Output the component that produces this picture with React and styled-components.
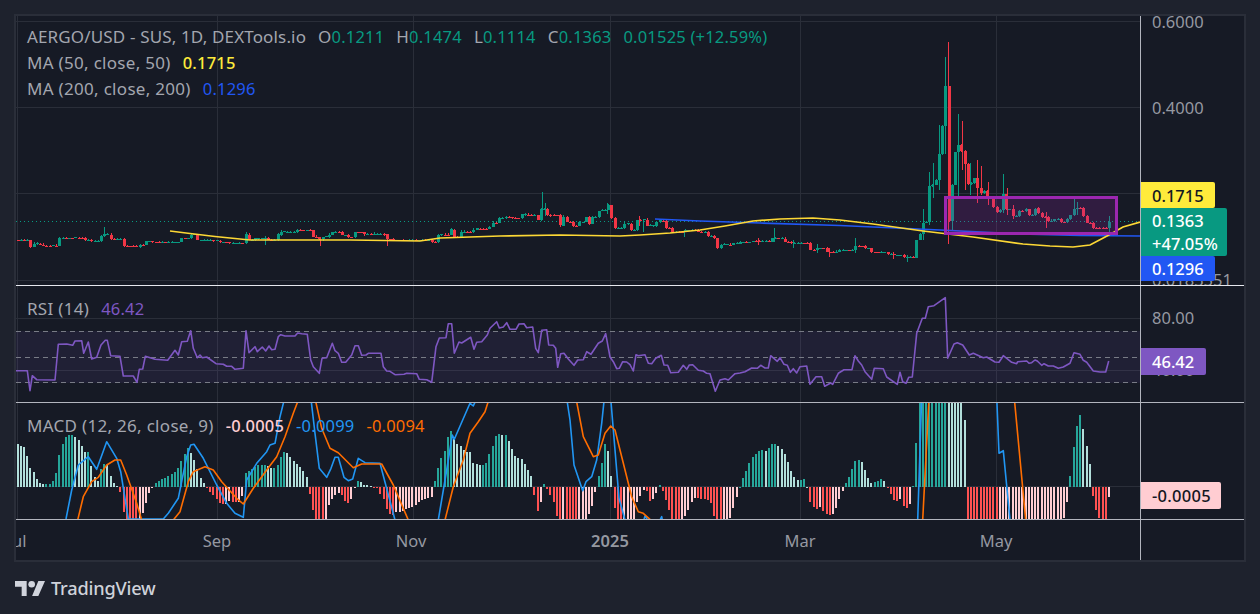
import React from 'react';
import styled, { createGlobalStyle } from 'styled-components';

const GlobalStyle = createGlobalStyle`
    html, body {
        margin: 0;
        padding: 0;
        background: #1e222d;
    }
`

// chart colours
const UP = '#089981';
const DOWN = '#f23645';
const GRID = '#2a2e39';
const AXIS_LINE = '#b2b5be';

// x of every daily candle, the last one sits at 1109
const STEP = 3.21;
const COUNT = 342;
const candleX = Array.from({ length: COUNT }, (_, i) => 1109 - STEP * (COUNT - 1 - i));

const noise = (i) => {
    const v = Math.sin(i * 12.9898) * 43758.5453;
    return v - Math.floor(v);
};

const interp = (pts, x) => {
    if (x <= pts[0][0]) return pts[0][1];
    for (let i = 1; i < pts.length; i++) {
        if (x <= pts[i][0]) {
            const [x0, y0] = pts[i - 1];
            const [x1, y1] = pts[i];
            return y0 + ((y1 - y0) * (x - x0)) / (x1 - x0);
        }
    }
    return pts[pts.length - 1][1];
};

// last traced close at or before this candle, so flats stay flat and jumps stay blocks
const stepAt = (pts, x) => {
    let y = pts[0][1];
    for (const [px, py] of pts) {
        if (px > x + 1.6) break;
        y = py;
    }
    return y;
};

// traced off a 3x crop: flat X,Y list back to page pixels
const traced = (ox, oy, flat) => {
    const out = [];
    for (let i = 0; i < flat.length; i += 2) out.push([ox + flat[i] / 3, oy + flat[i + 1] / 3]);
    return out;
};

const toPath = (pts) => pts.map(([x, y], i) => `${i ? 'L' : 'M'}${x.toFixed(1)} ${y.toFixed(1)}`).join('');

const closePts = [
    [14, 240], [28, 240], [32, 246.7], [35, 243.5], [40, 244.5], [42, 245.5], [57, 245.5], [59, 238], [68, 238], [75, 237.5],
    [83, 238], [86, 240], [91, 240.7], [100, 236], [104, 234.5], [110, 239], [122, 246], [135, 247], [139, 244.5], [147, 241],
    [152, 242.3], [170, 242.3], [182, 238.3], [192, 234.5], [197, 240], [213, 240.7], [220, 242.3], [230, 243.3], [245, 243.3],
    [247, 234.5], [250, 240], [255, 238.3], [260, 238], [268, 240], [277, 234.5], [282, 231.7], [293, 231.7], [298, 230],
    [307, 230], [312, 236.7], [318, 239.3], [323, 236.7], [328, 235], [333, 232], [342, 235], [348, 236.7], [355, 232.3],
    [363, 234], [383, 234.3], [386, 239.3], [393, 240], [419, 240], [433, 242], [438, 234.5], [447, 234.5], [450, 229.5],
    [455, 236.7], [460, 231.7], [472, 229.5], [478, 228.5], [488, 226.7], [492, 222.7], [498, 218], [507, 216.7], [511, 218],
    [520, 214.5], [527, 215], [537, 220], [542, 209], [548, 215], [557, 215], [559, 225.7], [562, 216.7], [568, 222],
    [573, 225.7], [578, 222], [587, 217], [590, 224], [593, 217], [600, 210.7], [603, 210], [607, 205], [611, 218], [615, 228],
    [620, 228], [623, 223.5], [628, 223.5], [632, 230], [636, 219.5], [642, 219.5], [648, 225.5], [655, 222], [660, 220.6],
    [666, 227.7], [671, 232], [678, 232], [685, 230], [695, 230], [698, 232], [707, 236], [713, 238], [716, 248], [719, 244.5],
    [727, 244.5], [732, 243.5], [740, 242], [753, 241], [770, 241.5], [772, 238], [778, 238.5], [785, 241.5], [792, 243],
    [800, 243], [810, 250], [817, 248], [827, 252], [835, 251.5], [840, 250], [855, 246], [865, 248.3], [873, 252.3], [887, 254],
    [895, 255], [903, 256.7], [913, 257.5], [916.2, 240], [919.4, 234], [922.6, 223], [925.8, 222], [929.2, 186], [932.4, 185],
    [935.7, 180], [938.9, 154], [942.1, 126], [945.3, 86], [948.5, 221], [951.7, 185], [954.9, 152], [958.2, 145], [961.4, 151],
    [964.6, 164], [967.8, 184], [971, 183], [974.2, 178], [977.4, 188], [980.6, 193], [983.8, 191], [987, 199], [990, 198],
    [993, 206.7], [996, 212], [1000, 210], [1003, 194], [1007, 209], [1013, 216], [1019, 211], [1025, 209], [1030, 215],
    [1035, 208.3], [1039, 212.7], [1043, 217], [1048, 220.7], [1053, 219.3], [1060, 222], [1067, 219.3], [1071, 215],
    [1074, 208.3], [1078, 208.3], [1083, 216], [1088, 222.7], [1093, 227.7], [1098, 227.7], [1105, 228.3], [1109, 221.7],
];

// the long wicks, [x, top, bottom]
const spikes = [
    [104, 227, 236], [246, 232, 243], [265, 236, 245], [320, 239, 246], [387, 240, 246], [542, 192, 220], [545, 203, 216],
    [607, 203, 214], [639, 216, 226], [643, 220, 232], [684, 230, 237], [758, 238, 245], [774, 228, 242], [793, 240, 248],
    [817, 244, 253], [829, 248, 257], [855, 238, 253], [893, 252, 259], [907, 255, 262], [923, 209, 240], [929, 172, 225],
    [933, 163, 198], [939, 125, 190], [945, 57, 154], [948, 42, 244], [952, 190, 230], [958, 114, 197], [962, 121, 170],
    [965, 150, 190], [970, 163, 195], [977, 160, 203], [981, 166, 195], [988, 182, 205], [1003, 174, 213], [1007, 188, 215],
    [1013, 205, 219], [1046, 212, 228], [1074, 197, 216], [1077, 202, 215], [1109, 216, 232],
];

const candles = candleX.map((x, i) => {
    const wobble = x < 915 || x > 1000 ? (noise(i) - 0.5) * 0.6 : 0;
    const close = stepAt(closePts, x) + wobble;
    const prev = i ? stepAt(closePts, candleX[i - 1]) : close;
    const top = Math.min(prev, close);
    const bottom = Math.max(prev, close);
    return {
        x: Math.round(x),
        up: close <= prev,
        top,
        height: Math.max(bottom - top, 1),
        high: top - noise(i + 7) * 1.4,
        low: bottom + noise(i + 13) * 1.4,
    };
});

const ma50 = [
    [170, 231], [190, 233.5], [215, 236.5], [250, 240], [300, 240], [350, 240], [420, 241], [440, 238], [500, 236], [560, 235],
    [620, 236], [640, 235], [670, 233], [700, 230], [725, 226], [753, 221], [780, 219], [813, 218], [840, 220], [873, 224],
    [923, 231], [973, 237], [1023, 244], [1050, 246], [1073, 247], [1090, 245], [1107, 236], [1123, 227], [1140, 222],
];
const ma200 = [[655, 219], [700, 221], [760, 223], [840, 225.5], [940, 230], [1020, 234], [1080, 235.5], [1140, 236]];

const rsi = [
    ...traced(0, 285, [46, 257, 82, 257, 90, 317, 97, 272, 110, 284, 165, 285, 175, 178, 200, 177, 218, 181, 225, 168, 245, 167, 251, 205, 265, 171, 275, 222, 290, 217, 303, 180, 316, 166, 322, 166, 332, 212, 360, 214, 370, 273, 400, 273, 411, 292, 418, 253, 428, 252, 436, 214, 465, 223, 503, 226, 525, 196, 535, 210, 545, 170, 562, 169, 572, 137, 580, 190, 592, 218, 600, 210, 607, 218, 620, 216, 648, 236, 670, 238, 680, 244, 695, 244, 705, 253, 730, 250, 738, 137, 747, 203, 765, 185, 772, 200, 787, 186, 797, 198, 807, 183, 815, 194, 825, 193, 835, 155, 842, 149, 855, 153, 885, 153, 893, 144, 905, 146, 922, 148, 932, 225, 940, 245, 958, 265, 966, 220, 980, 218, 997, 175, 1005, 197, 1015, 205, 1025, 232, 1037, 232, 1055, 210, 1065, 182, 1075, 182, 1085, 211, 1098, 210, 1105, 205, 1143, 205, 1150, 245, 1160, 258, 1170, 259, 1185, 269, 1212, 268, 1220, 265, 1250, 266, 1258, 283]),
    ...traced(420, 285, [20, 284, 35, 292, 48, 185, 58, 159, 78, 158, 85, 116, 95, 116, 103, 205, 117, 171, 125, 174, 152, 157, 162, 193, 170, 172, 185, 170, 202, 150, 210, 130, 230, 110, 238, 129, 250, 126, 260, 113, 270, 133, 288, 133, 297, 117, 312, 116, 320, 128, 338, 126, 347, 190, 355, 203, 365, 136, 380, 134, 386, 180, 400, 181, 407, 190, 413, 247, 422, 206, 432, 205, 445, 222, 462, 241, 473, 225, 490, 224, 500, 200, 513, 208, 535, 175, 547, 168, 557, 146, 570, 216, 580, 230, 590, 251, 598, 250, 608, 230, 620, 231, 630, 239, 640, 258, 648, 209, 655, 212, 675, 209, 685, 235, 695, 236, 707, 220, 724, 211, 732, 240, 743, 241, 752, 263, 775, 262, 790, 241, 800, 253, 808, 240, 818, 239, 835, 256, 850, 258, 860, 265, 870, 266, 886, 319, 900, 285, 915, 281, 925, 285, 945, 266, 960, 264, 975, 260, 995, 249, 1012, 250, 1022, 241, 1035, 249, 1045, 249, 1052, 212, 1072, 229, 1080, 218, 1092, 238, 1102, 241, 1111, 262, 1120, 251, 1130, 264, 1140, 245, 1160, 243, 1170, 298, 1188, 275, 1205, 275, 1214, 304, 1232, 294, 1238, 298, 1255, 265]),
    ...traced(840, 285, [12, 254, 36, 254, 45, 212, 55, 228, 65, 240, 75, 260, 95, 283, 103, 250, 130, 251, 140, 276, 172, 298, 180, 262, 188, 290, 198, 295, 206, 277, 217, 276, 230, 145, 247, 100, 256, 100, 265, 65, 282, 62, 316, 38, 323, 220, 342, 177, 352, 173, 368, 180, 388, 210, 400, 205, 430, 218, 440, 216, 465, 231, 477, 232, 490, 212, 515, 232, 530, 236, 533, 230, 560, 228, 567, 235, 575, 233, 585, 225, 592, 228, 605, 241, 612, 236, 625, 243, 640, 243, 655, 250, 670, 246, 690, 235, 702, 203, 720, 208, 730, 226, 740, 232, 760, 258, 780, 261, 797, 261, 806, 228]),
];

// histogram, px above/below the zero line. values past the pane edge just clip
const histPts = [
    ...traced(0, 0, [0, 129, 50, 129, 77, 117, 88, 60, 100, 45, 115, 15, 128, 9, 150, 9, 165, 21, 176, 87, 187, 126, 200, 156, 220, 156, 240, 135, 252, 105, 265, 105, 275, 60, 285, 24, 295, 15, 305, 60, 320, 75, 335, 21, 345, 6, 355, -1, 360, -9, 375, -105, 385, -150, 410, -210, 420, -99, 430, -75, 445, -24, 455, -3, 465, 9, 480, 18, 495, 27, 510, 33, 530, 48, 540, 69, 550, 87, 560, 120, 575, 99, 590, 60, 605, 18, 620, 0, 630, -15, 650, -36, 660, -51, 675, -54, 690, -42, 700, -48, 725, -45, 735, 39, 750, 48, 765, 60, 780, 66, 800, 66, 815, 54, 830, 57, 845, 96, 855, 108, 870, 90, 885, 72, 905, 57, 920, 27, 928, -15, 940, -75, 950, -150, 970, -190, 985, -60, 1000, -30, 1015, -18, 1030, -30, 1040, -54, 1055, -36, 1065, 3, 1075, 21, 1090, 6, 1110, 3, 1130, -3, 1150, -36, 1160, -66, 1175, -90, 1190, -75, 1205, -75, 1220, -66, 1240, -60, 1258, -45]),
    ...traced(420, 0, [10, -39, 20, -36, 35, -30, 45, 18, 57, 66, 67, 96, 75, 111, 85, 156, 97, 174, 105, 129, 115, 129, 125, 120, 135, 105, 150, 105, 160, 72, 170, 69, 182, 63, 190, 66, 200, 72, 210, 102, 220, 126, 230, 159, 240, 156, 258, 156, 268, 132, 278, 108, 288, 87, 300, 84, 308, 84, 318, 60, 328, 42, 337, 27, 345, -39, 357, -90, 365, -27, 375, 21, 383, -12, 395, -30, 405, -54, 418, -130, 435, -110, 470, -200, 505, -84, 510, -81, 520, -45, 530, 3, 540, 51, 550, 87, 558, 150, 570, 75, 578, -3, 597, -200, 640, -110, 647, -60, 655, -36, 665, -24, 675, 3, 685, -27, 693, -51, 705, -27, 713, -12, 723, 15, 732, -30, 745, -51, 755, -120, 780, -170, 790, -93, 800, -84, 810, -57, 820, -33, 830, -33, 840, -36, 850, -36, 860, -42, 870, -39, 878, -66, 900, -170, 935, -84, 945, -48, 955, -15, 965, 18, 975, 36, 985, 63, 995, 84, 1005, 96, 1015, 105, 1025, 111, 1040, 105, 1052, 126, 1062, 129, 1080, 120, 1092, 102, 1100, 87, 1110, 54, 1118, 39, 1128, 21, 1140, 21, 1158, 24, 1168, -39, 1180, -60, 1190, -66, 1200, -60, 1215, -81, 1228, -84, 1238, -84, 1245, -72, 1258, -36]),
    ...traced(840, 0, [5, -18, 15, 6, 25, 27, 33, 39, 42, 72, 52, 81, 62, 81, 72, 60, 80, 36, 92, 9, 100, 12, 110, 15, 120, 21, 128, 24, 140, 6, 150, -18, 158, -33, 168, -48, 180, -33, 188, -54, 198, -66, 207, -57, 216, -42, 228, 111, 237, 270, 315, 400, 373, 255, 376, 0, 380, -120, 470, -360, 675, -90, 681, -51, 690, 18, 702, 129, 712, 189, 720, 216, 729, 177, 738, 132, 750, 63, 758, -24, 768, -69, 777, -93, 797, -99, 807, -30]),
];
const ZERO = 486.7;
const histValues = candleX.map((x) => interp(histPts, x));
const histBars = candleX.map((x, i) => {
    const v = histValues[i];
    const prev = i ? histValues[i - 1] : v;
    let fill;
    if (v >= 0) fill = v >= prev ? '#26a69a' : '#b2dfdb';
    else fill = v <= prev ? '#ff5252' : '#ffcdd2';
    return { x: Math.round(x) - 1, y: v >= 0 ? ZERO - v : ZERO, height: Math.max(Math.abs(v), 1), fill };
});

const macdLine = [
    ...traced(0, 400, [198, 357, 215, 270, 235, 195, 265, 170, 290, 208, 320, 125, 350, 175, 362, 215, 385, 357, 490, 357, 505, 340, 535, 295, 560, 170, 572, 135, 582, 133, 610, 175, 650, 255, 680, 310, 705, 340, 730, 352, 740, 240, 770, 190, 800, 155, 810, 135, 825, 130, 840, 50, 855, -10, 932, -10, 945, 100, 958, 205, 980, 232, 993, 205, 1005, 172, 1015, 172, 1032, 232, 1045, 242, 1058, 237, 1075, 175, 1095, 188, 1140, 190, 1185, 360]),
    ...traced(420, 400, [55, 360, 80, 210, 97, 105, 103, 118, 150, 10, 160, 18, 170, -5, 440, -5, 450, 60, 462, 195, 488, 272, 498, 245, 515, 230, 530, 180, 545, 70, 553, -5, 572, -5, 585, 150, 597, 295, 615, 360, 660, 400, 675, 348, 683, 360, 700, 400, 725, 350, 735, 400]),
    ...traced(840, 400, [200, 500, 233, 360, 245, -10, 470, -10, 477, 160, 490, 152, 510, 360]),
];
const signalLine = [
    ...traced(0, 400, [233, 360, 250, 290, 275, 245, 295, 232, 320, 195, 345, 180, 362, 180, 380, 225, 410, 310, 425, 360, 520, 360, 540, 335, 565, 245, 580, 215, 615, 200, 640, 210, 665, 245, 710, 295, 730, 312, 760, 265, 800, 210, 830, 170, 855, 110, 880, 40, 897, -5, 945, -5, 965, 85, 990, 145, 1015, 158, 1060, 203, 1085, 192, 1145, 192, 1180, 255, 1225, 360]),
    ...traced(420, 400, [75, 360, 100, 260, 130, 180, 150, 100, 175, 65, 195, 35, 208, -5, 468, -5, 490, 110, 520, 170, 535, 165, 555, 100, 572, 78, 585, 90, 605, 170, 635, 290, 655, 335, 670, 340, 692, 360]),
    ...traced(840, 400, [248, 360, 267, -5, 523, -5, 557, 360]),
];

const monthLines = [17, 217, 413, 610, 800, 996];

const Page = styled.div`
    width: 1260px;
    height: 614px;
    padding: 14px 0 0 14px;
    box-sizing: border-box;
    background: #1e222d;
    font-family: "Noto Sans", "Open Sans", sans-serif;
    overflow: hidden;
`

const Frame = styled.div`
    width: 1232px;
    height: 548px;
    box-sizing: border-box;
    border: 2px solid ${GRID};
    background: #161a25;
    display: grid;
    grid-template-rows: 270px 117px 117px 40px;
`

const Pane = styled.section`
    position: relative;
    display: grid;
    grid-template-columns: 1124px 1fr;
    border-bottom: 1px solid ${(p) => (p.$strong ? '#e6e8ee' : AXIS_LINE)};
    overflow: hidden;
`

const Plot = styled.svg`
    display: block;
    width: 1124px;
    height: 100%;
`

const PriceAxis = styled.div`
    position: relative;
    border-left: 1px solid ${AXIS_LINE};
    overflow: hidden;
`

const PriceLabel = styled.span`
    position: absolute;
    left: 11px;
    top: ${(p) => p.$y}px;
    transform: translateY(-50%);
    font-size: 16.5px;
    line-height: 20px;
    color: #9598a1;
    white-space: nowrap;
`

const PriceTag = styled.span`
    position: absolute;
    left: 0;
    top: ${(p) => p.$y}px;
    width: ${(p) => p.$w}px;
    height: ${(p) => p.$h}px;
    box-sizing: border-box;
    padding-left: 11px;
    display: flex;
    flex-direction: column;
    justify-content: center;
    border-radius: 0 2px 2px 0;
    background: ${(p) => p.$bg};
    color: ${(p) => p.$fg || '#fff'};
    font-size: 16.5px;
    font-weight: 500;
    line-height: 23px;
    letter-spacing: ${(p) => p.$track || 0}px;
    z-index: ${(p) => p.$z || 1};
`

const Legend = styled.div`
    position: absolute;
    left: 11px;
    top: ${(p) => p.$top}px;
    display: flex;
    flex-direction: column;
    gap: 3px;
    z-index: 2;
    pointer-events: none;
`

const LegendRow = styled.div`
    display: flex;
    gap: 12px;
    height: 23px;
    align-items: center;
    font-size: 17px;
    letter-spacing: ${(p) => p.$track || 0.3}px;
    color: #a3a6af;
    white-space: nowrap;
`

const Value = styled.span`
    color: ${(p) => p.$color};
    font-size: 16.5px;
    letter-spacing: 0.2px;
    font-weight: ${(p) => (p.$bold ? 500 : 400)};
`

const TimeAxis = styled.div`
    position: relative;
    overflow: hidden;
`

const TimeLabel = styled.span`
    position: absolute;
    left: ${(p) => p.$x}px;
    top: 10px;
    transform: translateX(-50%);
    font-size: 16.5px;
    line-height: 22px;
    font-weight: ${(p) => (p.$bold ? 600 : 400)};
    color: #9598a1;
`

const AxisStub = styled.div`
    position: absolute;
    left: 1124px;
    top: 0;
    bottom: 0;
    width: 1px;
    background: ${AXIS_LINE};
`

const Brand = styled.footer`
    display: flex;
    align-items: center;
    gap: 6px;
    height: 30px;
    margin: 11px 0 0 1px;
    color: #cfd2da;
    font-size: 18.2px;
    font-weight: 500;
    letter-spacing: -0.2px;
`

const Logo = () => (
    <svg width="30" height="16" viewBox="0 0 36 19">
        <path fill="#d1d4dc" d="M14 19H8V8H0V1h14v18zM28 19h-7.5L28 1h8l-8 18z" />
        <circle fill="#d1d4dc" cx="20" cy="5" r="4" />
    </svg>
);

const GridLines = ({ rows, top, bottom }) => (
    <g stroke={GRID} strokeWidth="1" shapeRendering="crispEdges">
        {monthLines.map((x) => <line key={x} x1={x + 0.5} x2={x + 0.5} y1={top} y2={bottom} />)}
        {rows.map((y) => <line key={y} x1="16" x2="1140" y1={y + 0.5} y2={y + 0.5} />)}
    </g>
);

const Candles = () => (
    <g shapeRendering="crispEdges">
        {candles.map((c, i) => (
            <g key={i} fill={c.up ? UP : DOWN}>
                <rect x={c.x} y={c.high} width="1" height={c.low - c.high} />
                <rect x={c.x - 1} y={c.top} width="3" height={c.height} />
            </g>
        ))}
        {spikes.map(([x, top, bottom]) => {
            const near = candles.reduce((a, b) => (Math.abs(b.x - x) < Math.abs(a.x - x) ? b : a));
            return <rect key={x} x={x} y={top} width="1" height={bottom - top} fill={near.up ? UP : DOWN} />;
        })}
    </g>
);

const MainPane = () => (
    <Pane $strong>
        <Plot viewBox="16 16 1124 269">
            <GridLines rows={[21, 107, 193, 280]} top={16} bottom={285} />
            <line x1="16" x2="1140" y1="221.5" y2="221.5" stroke={UP} strokeDasharray="1 3" />
            <Candles />
            <path d={toPath(ma200)} fill="none" stroke="#2157f3" strokeWidth="1.7" />
            <path d={toPath(ma50)} fill="none" stroke="#fdd835" strokeWidth="1.7" />
            <rect x="945.5" y="197.5" width="171" height="36" fill="#9c27b0" fillOpacity="0.2" stroke="#9c27b0" strokeWidth="3" />
        </Plot>
        <PriceAxis>
            <PriceLabel $y={6}>0.6000</PriceLabel>
            <PriceLabel $y={92}>0.4000</PriceLabel>
            <PriceLabel $y={264}>0.0183551</PriceLabel>
            <PriceTag $y={166} $w={74} $h={26} $bg="#ffeb3b" $fg="#131722">0.1715</PriceTag>
            <PriceTag $y={192} $w={86} $h={48} $bg="#089981" $z={2}>
                <span>0.1363</span>
                <span>+47.05%</span>
            </PriceTag>
            <PriceTag $y={240} $w={74} $h={25} $bg="#2157f3">0.1296</PriceTag>
        </PriceAxis>
        <Legend $top={9}>
            <LegendRow $track={0.15}>
                <span>AERGO/USD - SUS, 1D, DEXTools.io</span>
                <span>O<Value $color={UP}>0.1211</Value></span>
                <span>H<Value $color={UP}>0.1474</Value></span>
                <span>L<Value $color={UP}>0.1114</Value></span>
                <span>C<Value $color={UP}>0.1363</Value></span>
                <Value $color={UP}>0.01525 (+12.59%)</Value>
            </LegendRow>
            <LegendRow>
                <span>MA (50, close, 50)</span>
                <Value $color="#fdeb3b" $bold>0.1715</Value>
            </LegendRow>
            <LegendRow>
                <span>MA (200, close, 200)</span>
                <Value $color="#2157f3">0.1296</Value>
            </LegendRow>
        </Legend>
    </Pane>
);

const RsiPane = () => (
    <Pane>
        <Plot viewBox="16 286 1124 116">
            <GridLines rows={[318, 370]} top={286} bottom={402} />
            <rect x="16" y="331" width="1124" height="52" fill="#7e57c2" fillOpacity="0.1" />
            <g stroke="#787b86" strokeDasharray="5 4">
                <line x1="16" x2="1140" y1="331.5" y2="331.5" />
                <line x1="16" x2="1140" y1="357.5" y2="357.5" />
                <line x1="16" x2="1140" y1="382.5" y2="382.5" />
            </g>
            <path d={toPath(rsi)} fill="none" stroke="#7e57c2" strokeWidth="1.6" strokeLinejoin="round" />
        </Plot>
        <PriceAxis>
            <PriceLabel $y={32}>80.00</PriceLabel>
            <PriceLabel $y={84}>40.00</PriceLabel>
            <PriceTag $y={62} $w={65} $h={27} $bg="#7e57c2">46.42</PriceTag>
        </PriceAxis>
        <Legend $top={11}>
            <LegendRow>
                <span>RSI (14)</span>
                <Value $color="#7e57c2">46.42</Value>
            </LegendRow>
        </Legend>
    </Pane>
);

const MacdPane = () => (
    <Pane>
        <Plot viewBox="16 403 1124 116">
            <GridLines rows={[486]} top={403} bottom={519} />
            <g shapeRendering="crispEdges">
                {histBars.map((b, i) => <rect key={i} x={b.x} y={b.y} width="2" height={b.height} fill={b.fill} />)}
            </g>
            <path d={toPath(macdLine)} fill="none" stroke="#2196f3" strokeWidth="1.6" strokeLinejoin="round" />
            <path d={toPath(signalLine)} fill="none" stroke="#ff6d00" strokeWidth="1.6" strokeLinejoin="round" />
        </Plot>
        <PriceAxis>
            <PriceLabel $y={86}>0</PriceLabel>
            <PriceTag $y={79} $w={80} $h={27} $bg="#ffcdd2" $fg="#131722" $track={0.3}>-0.0005</PriceTag>
        </PriceAxis>
        <Legend $top={11}>
            <LegendRow>
                <span>MACD (12, 26, close, 9)</span>
                <Value $color="#ffcdd2" $bold>-0.0005</Value>
                <Value $color="#2196f3">-0.0099</Value>
                <Value $color="#ff6d00">-0.0094</Value>
            </LegendRow>
        </Legend>
    </Pane>
);

const TimePane = () => (
    <TimeAxis>
        <TimeLabel $x={1}>Jul</TimeLabel>
        <TimeLabel $x={201}>Sep</TimeLabel>
        <TimeLabel $x={395}>Nov</TimeLabel>
        <TimeLabel $x={594} $bold>2025</TimeLabel>
        <TimeLabel $x={784}>Mar</TimeLabel>
        <TimeLabel $x={980}>May</TimeLabel>
        <AxisStub />
    </TimeAxis>
);

const App = () => {
    return (
        <Page>
            <GlobalStyle />
            <Frame>
                <MainPane />
                <RsiPane />
                <MacdPane />
                <TimePane />
            </Frame>
            <Brand>
                <Logo />
                <span>TradingView</span>
            </Brand>
        </Page>
    )
}

export default App;
